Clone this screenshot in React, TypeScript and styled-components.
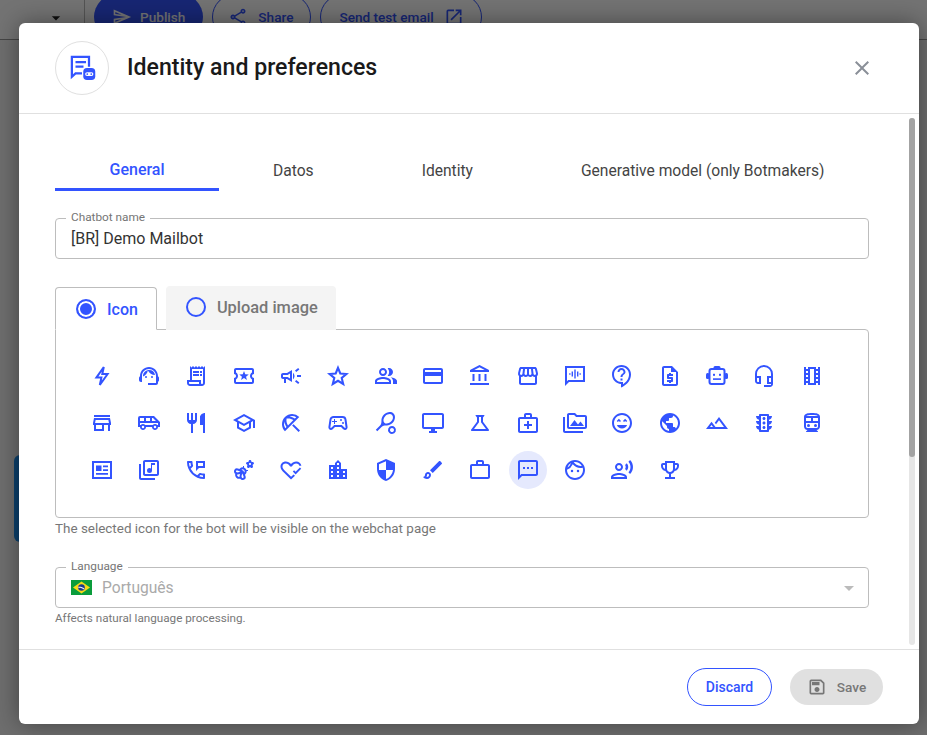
import React from "react"
import styled, { createGlobalStyle } from "styled-components"
import {
  MdOutlineSupportAgent,
  MdOutlineReceiptLong,
  MdOutlineLocalActivity,
  MdOutlineCampaign,
  MdOutlinePeopleAlt,
  MdOutlineCreditCard,
  MdOutlineAccountBalance,
  MdOutlineStorefront,
  MdOutlineContactSupport,
  MdOutlineRequestQuote,
  MdOutlineHeadsetMic,
  MdOutlineTheaters,
  MdOutlineStore,
  MdOutlineAirportShuttle,
  MdOutlineRestaurant,
  MdOutlineSchool,
  MdOutlineBeachAccess,
  MdOutlineSportsEsports,
  MdOutlineSportsTennis,
  MdOutlineDesktopWindows,
  MdOutlineScience,
  MdOutlineMedicalServices,
  MdOutlinePermMedia,
  MdOutlineSentimentVerySatisfied,
  MdPublic,
  MdOutlineLandscape,
  MdOutlineTraffic,
  MdOutlineDirectionsTransit,
  MdOutlineLibraryMusic,
  MdOutlinePermPhoneMsg,
  MdOutlineEmojiNature,
  MdOutlineLocationCity,
  MdOutlineSecurity,
  MdOutlineBrush,
  MdOutlineWorkOutline,
  MdOutlineSms,
  MdOutlineFace,
  MdOutlineRecordVoiceOver,
  MdOutlineEmojiEvents,
  MdClose,
  MdOutlineSave,
  MdArrowDropDown,
  MdOutlineShare,
  MdOutlineOpenInNew,
  MdOutlineSend,
} from "react-icons/md"

const GlobalStyle = createGlobalStyle`
  html, body {
    margin: 0;
    height: 100%;
    overflow: hidden;
    font-family: Roboto, "Liberation Sans", sans-serif;
  }
`

const blue = "#3354ff"

function BoltOutline() {
  return (
    <svg viewBox="0 0 24 24" width="1em" height="1em" fill="none" stroke="currentColor" strokeWidth="2">
      <path d="M13.8 3 6.4 13.6h5L9.8 21l7.8-11h-5.3z" />
    </svg>
  )
}

function StarOutline() {
  return (
    <svg viewBox="0 0 24 24" width="1em" height="1em" fill="none" stroke="currentColor" strokeWidth="2.1">
      <path d="M12 3.8 14.3 9.5l6.1.5-4.7 4 1.5 6-5.2-3.2L6.800 20l1.500-6-4.700-4 6.100-.5z" />
    </svg>
  )
}

function AudioChat() {
  return (
    <svg viewBox="0 0 24 24" width="1em" height="1em" fill="currentColor">
      <path d="M2 2h20v16H6l-4 4V2zm2 2v13.2L5.2 16H20V4H4z" />
      <path d="M11.3 5.500h1.400v9h-1.400zM8.600 7.500H10v5H8.600zM14 7.500h1.400v5H14zM6.200 9.200h1.300v1.600H6.200zM16.500 9.200h1.300v1.600h-1.300z" />
    </svg>
  )
}

function RobotHead() {
  return (
    <svg viewBox="0 0 24 24" width="1em" height="1em" fill="currentColor">
      <rect x="4.5" y="5" width="15" height="15" rx="2" fill="none" stroke="currentColor" strokeWidth="2" />
      <rect x="8.5" y="2" width="7" height="3.5" rx="1.5" />
      <rect x="1" y="9" width="3.5" height="6" rx="1.5" />
      <rect x="19.5" y="9" width="3.5" height="6" rx="1.5" />
      <rect x="8" y="9.8" width="2" height="2" />
      <rect x="14" y="9.8" width="2" height="2" />
      <rect x="8" y="14.3" width="8" height="1.6" />
    </svg>
  )
}

function HeartCheck() {
  return (
    <svg viewBox="0 0 24 24" width="1em" height="1em" fill="currentColor">
      <path d="M12 21.4 3.6 13.2C2.3 11.9 1.5 10.3 1.5 8.6 1.5 5.7 3.8 3.5 6.8 3.5c1.9 0 3.9.9 5.2 2.5 1.3-1.6 3.2-2.5 5.2-2.5 2.7 0 4.7 1.7 5.2 4.2h-2.1c-.4-1.4-1.6-2.2-3.1-2.2-1.8 0-3.2 1-4.3 2.9h-1.8C9.9 6.5 8.5 5.5 6.8 5.5c-1.9 0-3.3 1.3-3.3 3.1 0 1.2.6 2.4 1.6 3.3l7 6.9 2.5-2.4 1.4 1.4L12 21.4z" />
      <path d="m16.6 16.4-2.8-2.8 1.3-1.3 1.5 1.5 4.3-4.3 1.3 1.3-5.6 5.6z" />
    </svg>
  )
}

function NewsCard() {
  return (
    <svg viewBox="0 0 24 24" width="1em" height="1em" fill="currentColor">
      <path d="M2 3h20v18H2V3zm2 2v14h16V5H4z" />
      <path d="M6 7.5h5.5V13H6zM13 7.5h5v1.8h-5zM13 11.2h5V13h-5zM6 15h12v1.8H6z" />
    </svg>
  )
}

function BotMessage() {
  return (
    <svg viewBox="0 0 24 24" width="30" height="30" fill={blue}>
      <path d="M3 2.2h15.5V11h-1.8V4H4.8v13l1.7-1.6H12v1.8H7.2L3 21V2.2z" />
      <path d="M6.8 6.4h8.4v1.8H6.8zM6.8 10h6.4v1.8H6.8z" />
      <rect x="13" y="12" width="9.6" height="9.6" rx="3" />
      <rect x="14.5" y="15.3" width="6.6" height="3" rx="1.5" fill="#fff" />
      <circle cx="16.2" cy="16.8" r=".7" />
      <circle cx="19.4" cy="16.8" r=".7" />
    </svg>
  )
}

function BrazilFlag() {
  return (
    <svg viewBox="0 0 21 15" width="21" height="15">
      <rect width="21" height="15" fill="#0a9c3b" />
      <path d="M10.5 1.6 19 7.5l-8.5 5.9L2 7.5z" fill="#f7d917" />
      <circle cx="10.5" cy="7.5" r="3.3" fill="#1c3a8c" />
      <path d="M7.4 6.8c2.2-.2 4.4.4 6 1.9l-.4.8c-1.6-1.4-3.6-2-5.7-1.8z" fill="#fff" />
    </svg>
  )
}

const iconRows: React.ComponentType[] = [
  BoltOutline,
  MdOutlineSupportAgent,
  MdOutlineReceiptLong,
  MdOutlineLocalActivity,
  MdOutlineCampaign,
  StarOutline,
  MdOutlinePeopleAlt,
  MdOutlineCreditCard,
  MdOutlineAccountBalance,
  MdOutlineStorefront,
  AudioChat,
  MdOutlineContactSupport,
  MdOutlineRequestQuote,
  RobotHead,
  MdOutlineHeadsetMic,
  MdOutlineTheaters,
  MdOutlineStore,
  MdOutlineAirportShuttle,
  MdOutlineRestaurant,
  MdOutlineSchool,
  MdOutlineBeachAccess,
  MdOutlineSportsEsports,
  MdOutlineSportsTennis,
  MdOutlineDesktopWindows,
  MdOutlineScience,
  MdOutlineMedicalServices,
  MdOutlinePermMedia,
  MdOutlineSentimentVerySatisfied,
  MdPublic,
  MdOutlineLandscape,
  MdOutlineTraffic,
  MdOutlineDirectionsTransit,
  NewsCard,
  MdOutlineLibraryMusic,
  MdOutlinePermPhoneMsg,
  MdOutlineEmojiNature,
  HeartCheck,
  MdOutlineLocationCity,
  MdOutlineSecurity,
  MdOutlineBrush,
  MdOutlineWorkOutline,
  MdOutlineSms,
  MdOutlineFace,
  MdOutlineRecordVoiceOver,
  MdOutlineEmojiEvents,
]

const SELECTED = 41

const tabs = ["General", "Datos", "Identity", "Generative model (only Botmakers)"]

export default function App() {
  return (
    <Page>
      <GlobalStyle />
      <TopBar>
        <MdArrowDropDown size={20} color="#222" />
        <BarDivider />
        <PublishButton>
          <MdOutlineSend size={20} />
          Publish
        </PublishButton>
        <ShareButton>
          <MdOutlineShare size={20} />
          Share
        </ShareButton>
        <SendButton>
          Send test email
          <MdOutlineOpenInNew size={20} />
        </SendButton>
      </TopBar>
      <SideTab />
      <Overlay />
      <Modal>
        <Header>
          <AvatarCircle>
            <BotMessage />
          </AvatarCircle>
          <Title>Identity and preferences</Title>
          <CloseButton>
            <MdClose size={24} />
          </CloseButton>
        </Header>
        <Body>
          <TabBar>
            {tabs.map((t, i) => (
              <TabItem key={t} $active={i === 0}>
                {t}
              </TabItem>
            ))}
          </TabBar>
          <Field>
            <FieldLabel>Chatbot name</FieldLabel>
            <FieldValue>[BR] Demo Mailbot</FieldValue>
          </Field>
          <ChoiceTabs>
            <ChoiceTab $active>
              <Radio $checked />
              Icon
            </ChoiceTab>
            <ChoiceTab>
              <Radio />
              Upload image
            </ChoiceTab>
          </ChoiceTabs>
          <IconPanel>
            {iconRows.map((Icon, i) => (
              <IconCell key={i} $selected={i === SELECTED}>
                <Icon />
              </IconCell>
            ))}
          </IconPanel>
          <PanelHint>The selected icon for the bot will be visible on the webchat page</PanelHint>
          <LanguageField>
            <FieldLabel>Language</FieldLabel>
            <BrazilFlag />
            <DisabledValue>Português</DisabledValue>
            <SelectCaret>
              <MdArrowDropDown size={24} />
            </SelectCaret>
          </LanguageField>
          <SmallHint>Affects natural language processing.</SmallHint>
          <ScrollTrack>
            <ScrollThumb />
          </ScrollTrack>
        </Body>
        <Footer>
          <DiscardButton>Discard</DiscardButton>
          <SaveButton>
            <MdOutlineSave size={20} />
            Save
          </SaveButton>
        </Footer>
      </Modal>
    </Page>
  )
}

const Page = styled.div`
  position: relative;
  width: 927px;
  height: 735px;
  background: #f4f4f4;
  overflow: hidden;
`

const TopBar = styled.div`
  box-sizing: border-box;
  height: 40px;
  display: flex;
  align-items: flex-end;
  gap: 9px;
  padding: 0 0 0 46px;
  background: #fff;
  border-bottom: 1px solid #999;
  overflow: hidden;
  & > svg {
    margin-bottom: 11px;
  }
`

const BarDivider = styled.div`
  width: 1px;
  align-self: stretch;
  background: #bbb;
  margin-left: 9px;
`

const PublishButton = styled.div`
  display: flex;
  align-items: center;
  gap: 8px;
  box-sizing: border-box;
  height: 46px;
  margin-bottom: -1px;
  padding: 0 18px;
  border-radius: 23px;
  background: ${blue};
  color: #fff;
  font-size: 13.6px;
  font-weight: 500;
`

const ShareButton = styled.div`
  display: flex;
  align-items: center;
  gap: 10px;
  box-sizing: border-box;
  height: 46px;
  margin-bottom: -1px;
  padding: 0 17px 0 15px;
  border-radius: 23px;
  border: 1px solid ${blue};
  color: ${blue};
  font-size: 13.6px;
  font-weight: 500;
`

const SendButton = styled(ShareButton)`
  padding: 0 17px 0 18px;
`

const SideTab = styled.div`
  position: absolute;
  left: 14px;
  top: 455px;
  width: 30px;
  height: 87px;
  border-radius: 6px;
  background: #1c8ff0;
`

const Overlay = styled.div`
  position: absolute;
  inset: 0;
  background: rgba(0, 0, 0, 0.55);
`

const Modal = styled.div`
  position: absolute;
  left: 19px;
  top: 23px;
  width: 900px;
  height: 701px;
  display: flex;
  flex-direction: column;
  background: #fff;
  border-radius: 6px;
  box-shadow: 0 0 24px rgba(0, 0, 0, 0.4);
`

const Header = styled.div`
  box-sizing: border-box;
  height: 91px;
  flex: none;
  display: flex;
  align-items: center;
  padding: 0 36px;
  border-bottom: 1px solid #e0e0e0;
`

const AvatarCircle = styled.div`
  box-sizing: border-box;
  width: 54px;
  height: 54px;
  border: 1px solid #e0e0e0;
  border-radius: 50%;
  display: flex;
  align-items: center;
  justify-content: center;
  margin-right: 18px;
`

const Title = styled.h1`
  flex: 1;
  margin: 0 0 1px;
  font-size: 23.1px;
  font-weight: 500;
  color: #1a1a1a;
`

const CloseButton = styled.div`
  display: flex;
  color: #8a8f98;
  margin-right: 9px;
`

const Body = styled.div`
  position: relative;
  flex: 1;
  min-height: 0;
  overflow: hidden;
  padding: 34px 0 0 36px;
`

const ScrollTrack = styled.div`
  position: absolute;
  top: 4px;
  bottom: 4px;
  right: 4px;
  width: 6px;
  background: #e6e6e6;
  border-radius: 3px;
`

const ScrollThumb = styled.div`
  height: 339px;
  background: #a3a3a3;
  border-radius: 3px;
`

const TabBar = styled.div`
  display: flex;
  height: 43px;
  margin-bottom: 27px;
`

const TabItem = styled.div<{ $active?: boolean }>`
  box-sizing: border-box;
  flex: none;
  padding: ${p => (p.$active ? "0 54.5px" : "0 54px")};
  text-align: center;
  line-height: ${p => (p.$active ? "44px" : "47px")};
  font-size: ${p => (p.$active ? "16px" : "15.6px")};
  font-weight: ${p => (p.$active ? 500 : 400)};
  color: ${p => (p.$active ? blue : "#444")};
  border-bottom: 3px solid ${p => (p.$active ? blue : "transparent")};
  white-space: nowrap;
`

const Field = styled.div`
  position: relative;
  box-sizing: border-box;
  width: 814px;
  height: 41px;
  border: 1px solid #bdbdbd;
  border-radius: 4px;
  display: flex;
  align-items: center;
  padding: 0 15px;
`

const FieldLabel = styled.span`
  position: absolute;
  left: 10px;
  top: -9px;
  padding: 0 5px;
  background: #fff;
  font-size: 11.8px;
  line-height: 14px;
  color: #757575;
`

const FieldValue = styled.span`
  font-size: 16px;
  color: #333;
`

const ChoiceTabs = styled.div`
  display: flex;
  align-items: flex-end;
  gap: 9px;
  margin-top: 27px;
  height: 44px;
`

const ChoiceTab = styled.div<{ $active?: boolean }>`
  position: relative;
  z-index: ${p => (p.$active ? 1 : 0)};
  box-sizing: border-box;
  display: flex;
  align-items: center;
  gap: 11px;
  height: ${p => (p.$active ? "43px" : "44px")};
  padding: ${p => (p.$active ? "1px 18px 0 20px" : "0 17px 3px 19px")};
  border: 1px solid ${p => (p.$active ? "#bdbdbd" : "#f4f4f4")};
  border-bottom: ${p => (p.$active ? "1px solid #fff" : "none")};
  border-radius: 4px 4px 0 0;
  background: ${p => (p.$active ? "#fff" : "#f4f4f4")};
  font-size: ${p => (p.$active ? "16px" : "16.4px")};
  font-weight: 500;
  color: ${p => (p.$active ? blue : "#777")};
`

const Radio = styled.span<{ $checked?: boolean }>`
  box-sizing: border-box;
  width: 20px;
  height: 20px;
  border: 2px solid ${blue};
  border-radius: 50%;
  background: ${p => (p.$checked ? blue : "transparent")};
  box-shadow: ${p => (p.$checked ? "inset 0 0 0 2px #fff" : "none")};
`

const IconPanel = styled.div`
  box-sizing: border-box;
  width: 814px;
  height: 189px;
  margin-top: -1px;
  border: 1px solid #bdbdbd;
  border-radius: 0 4px 4px 4px;
  padding: 22px 25px 0 22px;
  display: grid;
  grid-template-columns: repeat(16, 47.33px);
  grid-auto-rows: 47.33px;
  align-content: start;
`

const IconCell = styled.div<{ $selected?: boolean }>`
  display: flex;
  align-items: center;
  justify-content: center;
  font-size: 24px;
  color: ${blue};
  border-radius: 50%;
  width: 38px;
  height: 38px;
  align-self: center;
  justify-self: center;
  background: ${p => (p.$selected ? "#e5e9fd" : "transparent")};
`

const PanelHint = styled.div`
  margin-top: 3px;
  font-size: 13.45px;
  line-height: 16px;
  color: #777;
`

const LanguageField = styled(Field)`
  margin-top: 30px;
  gap: 10px;
`

const DisabledValue = styled.span`
  font-size: 15.6px;
  color: #aaa;
`

const SelectCaret = styled.span`
  margin-left: auto;
  display: flex;
  color: #bbb;
  margin-right: -8px;
`

const SmallHint = styled.div`
  margin-top: 3px;
  font-size: 11.7px;
  line-height: 14px;
  color: #777;
`

const Footer = styled.div`
  box-sizing: border-box;
  height: 75px;
  flex: none;
  display: flex;
  align-items: center;
  justify-content: flex-end;
  gap: 18px;
  padding: 0 36px 0 0;
  border-top: 1px solid #e0e0e0;
`

const DiscardButton = styled.div`
  box-sizing: border-box;
  width: 85px;
  height: 38px;
  border: 1px solid ${blue};
  border-radius: 19px;
  display: flex;
  align-items: center;
  justify-content: center;
  color: ${blue};
  font-size: 14px;
  font-weight: 500;
`

const SaveButton = styled.div`
  box-sizing: border-box;
  width: 93px;
  height: 36px;
  border-radius: 18px;
  background: #e0e0e0;
  display: flex;
  align-items: center;
  justify-content: center;
  gap: 10px;
  color: #777;
  font-size: 13.6px;
  font-weight: 500;
`
